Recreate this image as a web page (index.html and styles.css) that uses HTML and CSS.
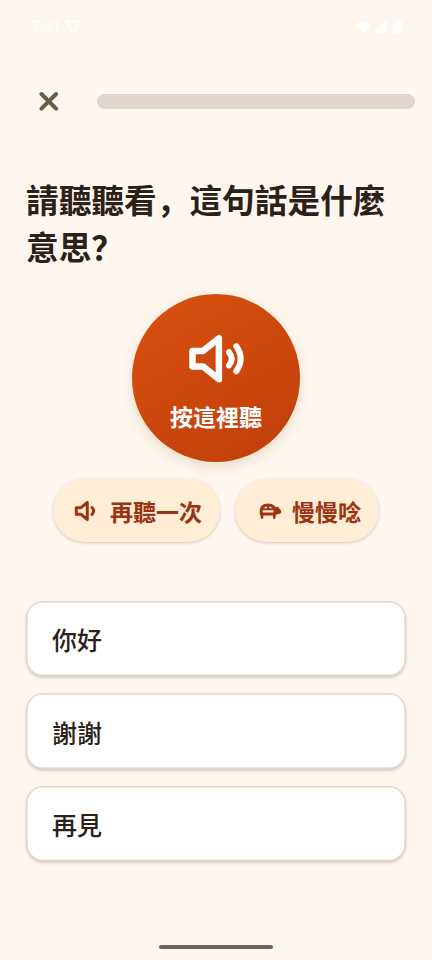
FILE: index.html
```html
<!DOCTYPE html>
<html lang="zh-Hans">
<head>
<meta charset="utf-8">
<title>聽力練習</title>
<link rel="stylesheet" href="styles.css">
</head>
<body>
<div class="screen">
  <div class="status">
    <div class="status-left">
      <span class="time">7:31</span>
      <svg width="15" height="14" viewBox="0 0 15 14" fill="none" stroke="currentColor" stroke-linejoin="round" stroke-linecap="round"><path stroke-width="1.7" d="M2 1.2h11q1.3.2.8 1.5L8.6 12q-1.1 1.3-2.2 0L1.2 2.700Q.8 1.4 2 1.2z"/><path stroke-width="1" d="M5 4q2.500-1.500 5 0M5.300 6q2.200-1.200 4.400 0M6 8q1.500-.8 3 0"/></svg>
    </div>
    <svg class="status-right" width="46" height="15" viewBox="0 0 46 15" fill="currentColor"><path d="M0 4Q8-3 15.500 4L7.700 13.500zM30.300 0v13.500H17zM39 1.500h1.500V0h3v1.500H45q1 0 1 1v10q0 1.500-1 1.500h-6q-1.500 0-1.500-1.500v-10q0-1 1.500-1z"/></svg>
  </div>
  <header class="top">
    <button class="close" aria-label="關閉"><svg width="20" height="20" viewBox="0 0 20 20" fill="none" stroke="currentColor" stroke-width="4" stroke-linecap="round"><path d="M2.500 3l14.600 14.600M17.100 3L2.500 17.600"/></svg></button>
    <div class="progress"></div>
  </header>
  <main>
    <h1>請聽聽看，這句話是什麼意思？</h1>
    <button class="listen">
      <svg class="listen-icon" width="58" height="50" viewBox="0 0 58 50" fill="none" stroke="currentColor" stroke-width="6.500" stroke-linejoin="round" stroke-linecap="round"><path d="M5.500 17H16L31.900 4.300v40.900L16 32.400H5.500z"/><path stroke-width="6" d="M42 18.200q5.500 6.500 0 13.200M49.300 12.300q8.700 12.400 0 25"/></svg>
      <span>按這裡聽</span>
    </button>
    <div class="actions">
      <button class="pill"><svg width="24" height="24" viewBox="0 0 24 24" fill="none" stroke="currentColor" stroke-width="3" stroke-linejoin="round" stroke-linecap="round"><path d="M2.300 8.700H7L13.300 3.400v17.200L7 15.300H2.300z"/><path d="M18 8.500q3.200 3.500 0 7"/></svg><span>再聽一次</span></button>
      <button class="pill pill-slow"><svg width="24" height="24" viewBox="0 0 24 24" fill="none" stroke="currentColor" stroke-width="3" stroke-linejoin="round" stroke-linecap="round"><path d="M3.200 15V12Q3.200 6 10 6t7 6v3z"/><path stroke-width="2.600" d="M4 15v3.600M16.200 15v3.600"/><path stroke-width="2" d="M5 10.300h10.500M10.200 7v3"/><path fill="currentColor" stroke-width="1.500" d="M18 9.400q1.500-1.700 2.700.2 0 1.200 1.600 2.100.8 1.700-1.100 2.500l-3 .5z"/></svg><span>慢慢唸</span></button>
    </div>
    <div class="answers">
      <button class="answer">你好</button>
      <button class="answer">謝謝</button>
      <button class="answer">再見</button>
    </div>
  </main>
  <div class="home"></div>
</div>
</body>
</html>
```
FILE: styles.css
```css
* { box-sizing: border-box; }
body { margin: 0; background: #fff7ef; color: #2c2118; font-family: Roboto, "Noto Sans CJK SC", sans-serif; }
button { border: 0; padding: 0; margin: 0; font: inherit; color: inherit; background: none; }
svg { display: block; flex: none; }
.screen { width: 432px; height: 960px; display: flex; flex-direction: column; overflow: hidden; }
.status { height: 54px; padding: 0 30px 0 32px; display: flex; justify-content: space-between; align-items: center; color: #fff; font-size: 16px; }
.status-left { display: flex; align-items: center; gap: 5px; }
.time { line-height: 20px; font-size: 15px; }
.top { height: 94px; padding: 0 17px 0 32px; display: flex; align-items: center; gap: 32px; }
.close { width: 33px; height: 48px; display: flex; align-items: center; justify-content: center; color: #6b5b4d; }
.progress { flex: 1; height: 15px; border-radius: 8px; background: #e0d5c9; }
main { padding: 28px 26px 0; display: flex; flex-direction: column; align-items: center; }
h1 { width: 100%; height: 94px; margin: 0; font: 700 32.700px/46.700px "Noto Sans CJK SC", sans-serif; }
.listen { width: 168px; height: 168px; margin-top: 24px; padding-top: 40px; border-radius: 50%; display: flex; flex-direction: column; align-items: center; background: linear-gradient(150deg, #d9510f, #c03e0b); box-shadow: 0 5px 14px rgba(120, 90, 0, .16); color: #fff; font: 700 23px/34px "Noto Sans CJK SC", sans-serif; }
.listen span { margin-top: 15px; }
.actions { display: flex; gap: 15px; margin-top: 17px; }
.pill { width: 167px; height: 63px; padding: 0 0 0 21px; border-radius: 32px; display: flex; align-items: center; gap: 12px; background: #ffedd5; color: #9a3412; box-shadow: 0 1px 3px rgba(60, 40, 20, .24); font: 700 23px/34px "Noto Sans CJK SC", sans-serif; }
.pill-slow { width: 144px; padding-left: 23px; gap: 10px; }
.answers { width: 100%; margin-top: 59px; display: flex; flex-direction: column; gap: 17px; }
.answer { width: 100%; height: 75.400px; padding: 1px 0 0 25px; border: 1px solid #e0d5c9; border-radius: 17px; background: #fff; box-shadow: inset 0 0 0 .6px #e0d5c9, 0 2px 3px rgba(60, 40, 20, .2); text-align: left; font: 500 25px/36px "Noto Sans CJK SC", sans-serif; }
.home { width: 114px; height: 4px; margin: auto auto 11px; border-radius: 2px; background: #6b6461; }
```
